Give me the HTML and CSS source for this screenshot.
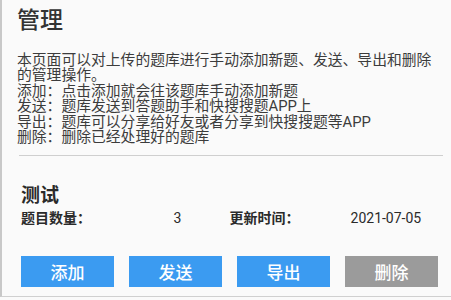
FILE: index.html
```html
<!DOCTYPE html>
<html lang="zh-CN">
<head>
<meta charset="utf-8">
<link rel="stylesheet" href="styles.css">
</head>
<body>
<div class="page">
  <div class="intro">
    <h1 class="title">管理</h1>
    <div class="desc">
      <p>本页面可以对上传的题库进行手动添加新题、发送、导出和删除的管理操作。</p>
      <p>添加：点击添加就会往该题库手动添加新题</p>
      <p>发送：题库发送到答题助手和快搜搜题APP上</p>
      <p>导出：题库可以分享给好友或者分享到快搜搜题等APP</p>
      <p>删除：删除已经处理好的题库</p>
    </div>
  </div>
  <div class="divider"></div>
  <div class="bank">
    <div class="bank-name">测试</div>
    <div class="bank-info">
      <span class="label">题目数量：</span>
      <span class="value">3</span>
      <span class="label">更新时间：</span>
      <span class="value">2021-07-05</span>
    </div>
    <div class="actions">
      <button class="btn">添加</button>
      <button class="btn">发送</button>
      <button class="btn">导出</button>
      <button class="btn btn-gray">删除</button>
    </div>
  </div>
</div>
</body>
</html>
```

FILE: styles.css
```css
html, body {
  margin: 0;
  padding: 0;
  background: #fafafa;
}
body {
  font-family: "Roboto", "Noto Sans CJK SC", sans-serif;
  color: #333;
}
.page {
  box-sizing: border-box;
  height: 297px;
  border-left: 2px solid #c8c8c8;
  border-bottom: 1px solid #d0d0d0;
  background: #fafafa;
  overflow: hidden;
}
.intro {
  padding-left: 15px;
}
.title {
  margin: 7px 0 0;
  font-size: 23px;
  line-height: 28px;
  font-weight: 500;
  color: #333;
}
.desc {
  margin-top: 18px;
  font-size: 14.8px;
  line-height: 15.4px;
  color: #3c3c3c;
  padding-right: 8px;
}
.desc p {
  margin: 0;
}
.divider {
  height: 1px;
  background: #cfcfcf;
  margin: 10px 8px 0 17px;
}
.bank {
  padding: 0 0 0 19px;
  width: 417px;
}
.bank-name {
  margin-top: 29px;
  font-size: 19px;
  line-height: 22px;
  font-weight: 700;
  color: #2a2a2a;
}
.bank-info {
  margin-top: 2px;
  display: grid;
  grid-template-columns: repeat(4, 1fr);
  font-size: 14px;
  line-height: 18px;
  color: #2a2a2a;
}
.label {
  font-weight: 700;
}
.value {
  text-align: center;
}
.actions {
  margin-top: 29px;
  display: grid;
  grid-template-columns: repeat(4, 93px);
  column-gap: 15px;
}
.btn {
  height: 31px;
  border: 0;
  padding: 0;
  margin: 0;
  background: #3b9bf1;
  color: #fff;
  font-family: "Roboto", "Noto Sans CJK SC", sans-serif;
  font-size: 17px;
  font-weight: 500;
}
.btn-gray {
  background: #9b9b9b;
}
```
